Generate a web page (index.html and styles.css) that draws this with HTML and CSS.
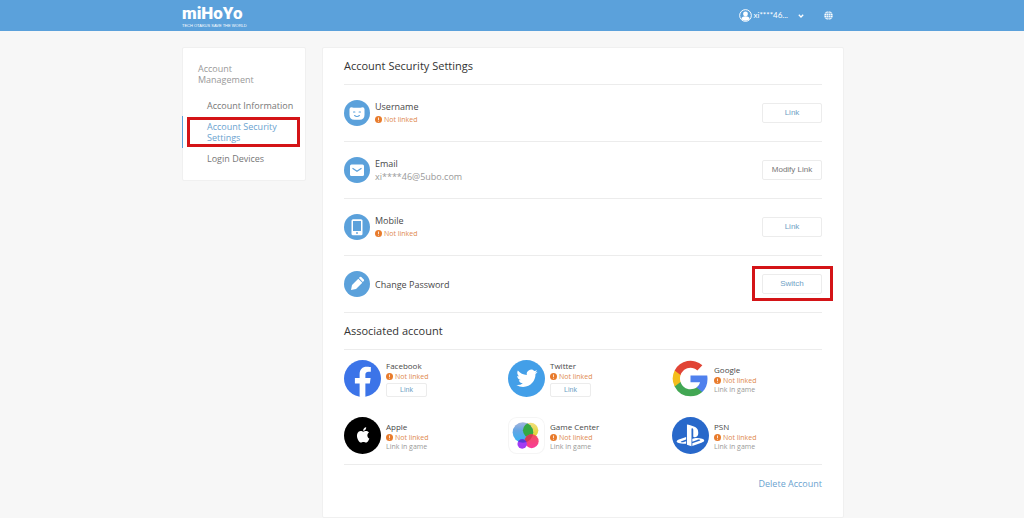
FILE: index.html
```html
<!DOCTYPE html>
<html lang="en">
<head>
<meta charset="utf-8">
<meta name="viewport" content="width=device-width, initial-scale=1">
<title>Account Security Settings</title>
<link rel="stylesheet" href="styles.css">
</head>
<body>
<svg class="defs" aria-hidden="true">
  <symbol id="warn" viewBox="0 0 14 14"><circle cx="7" cy="7" r="7" fill="#e87b2c"/><path d="M7 3v5M7 9.500v1.800" stroke="#fff" stroke-width="1.600"/></symbol>
</svg>
<header class="topbar">
  <div class="container topbar-inner">
    <a class="logo" href="#"><span class="logo-name">miHoYo</span><span class="logo-tag">TECH OTAKUS SAVE THE WORLD</span></a>
    <div class="tools">
      <button class="user" type="button">
        <svg class="avatar" viewBox="0 0 24 24"><circle cx="12" cy="12" r="10.800" fill="none" stroke="#fff" stroke-width="1.800"/><circle cx="12" cy="9" r="4.500" fill="#fff"/><path d="M4.500 19c0-4 3-5.500 7.500-5.500s7.500 1.500 7.500 5.500c-4 3.500-11 3.500-15 0z" fill="#fff"/></svg>
        <span class="user-name">xi****46...</span>
        <svg class="chevron" viewBox="0 0 6 6"><path d="M.8 1.800 3 4l2.200-2.200" fill="none" stroke="#fff" stroke-width="1.300"/></svg>
      </button>
      <button class="language" type="button" aria-label="Language">
        <svg class="globe" viewBox="0 0 18 18"><circle cx="9" cy="9" r="8.500" fill="#fff"/><g fill="none" stroke="#5ba1db" stroke-width="1"><ellipse cx="9" cy="9" rx="4" ry="8.500"/><path d="M9 0v18M0 9h18M1.500 5h15M1.500 13h15"/></g></svg>
      </button>
    </div>
  </div>
</header>
<div class="container layout">
  <nav class="sidebar">
    <h2 class="sidebar-title">Account Management</h2>
    <a class="nav-item" href="#">Account Information</a>
    <a class="nav-item active" href="#" aria-current="page">Account Security Settings<span class="mark mark-nav"></span></a>
    <a class="nav-item" href="#">Login Devices</a>
  </nav>
  <main class="panel">
    <h1 class="heading">Account Security Settings</h1>
    <section class="row">
      <svg class="row-icon" viewBox="0 0 26 26"><circle cx="13" cy="13" r="13" fill="#5ba1db"/><path d="M7.500 7.200q1 0 2 .5h7q1-.5 2-.5 2 0 2 2v5.500q0 5-5 5h-5q-5 0-5-5V9.200q0-2 2-2z" fill="#fff"/><path d="M9.500 12h1.400M15.100 12h1.400M10.600 15.500q2.400 2 4.800 0" fill="none" stroke="#5ba1db" stroke-width="1.100" stroke-linecap="round"/></svg>
      <div class="row-text"><span class="name">Username</span><span class="status"><svg class="warn"><use href="#warn"/></svg>Not linked</span></div>
      <button class="btn" type="button">Link</button>
    </section>
    <section class="row">
      <svg class="row-icon" viewBox="0 0 26 26"><circle cx="13" cy="13" r="13" fill="#5ba1db"/><rect x="6" y="7.500" width="14" height="11.500" rx="1.500" fill="#fff"/><path d="m8.500 11.200 4.500 3 4.500-3" fill="none" stroke="#5ba1db" stroke-width="1.200"/></svg>
      <div class="row-text"><span class="name">Email</span><span class="detail">xi****46@5ubo.com</span></div>
      <button class="btn muted" type="button">Modify Link</button>
    </section>
    <section class="row">
      <svg class="row-icon" viewBox="0 0 26 26"><circle cx="13" cy="13" r="13" fill="#5ba1db"/><rect x="7.500" y="5.200" width="11" height="16" rx="1.500" fill="#fff"/><path d="M9 7h8v10H9z" fill="#5ba1db"/><circle cx="13" cy="19" r=".9" fill="#5ba1db"/></svg>
      <div class="row-text"><span class="name">Mobile</span><span class="status"><svg class="warn"><use href="#warn"/></svg>Not linked</span></div>
      <button class="btn" type="button">Link</button>
    </section>
    <section class="row">
      <svg class="row-icon" viewBox="0 0 26 26"><circle cx="13" cy="13" r="13" fill="#5ba1db"/><path d="m7 19 1-5 6.300-6.300 4 4L12 18zM14.900 7.100l1-1q.7-.6 1.400 0l2.500 2.500q.7.700 0 1.400l-1 1z" fill="#fff"/></svg>
      <div class="row-text"><span class="name">Change Password</span></div>
      <button class="btn" type="button">Switch<span class="mark mark-btn"></span></button>
    </section>
    <h2 class="heading">Associated account</h2>
    <div class="accounts">
      <div class="account">
        <svg class="brand" viewBox="0 0 36 36"><circle cx="18" cy="18" r="18" fill="#3c74e8"/><path d="M15.200 35.800V22.800h-4.600v-5.200h4.600v-3.900c0-4.700 2.700-7.200 6.900-7.200 2 0 4 .4 4 .4v4.500h-2.300c-2.300 0-3 1.400-3 2.900v3.300h5.100l-.8 5.200h-4.300v13a18 18 0 0 1-5.600 0z" fill="#fff"/></svg>
        <div class="account-text"><span class="name">Facebook</span><span class="status"><svg class="warn"><use href="#warn"/></svg>Not linked</span><button class="btn small" type="button">Link</button></div>
      </div>
      <div class="account">
        <svg class="brand" viewBox="0 0 36 36"><circle cx="18" cy="18" r="18" fill="#439fe8"/><path transform="translate(8.200 7.500) scale(.86)" fill="#fff" d="M23.950 4.570a10 10 0 0 1-2.820.77 4.960 4.960 0 0 0 2.160-2.720c-.95.550-2 .95-3.130 1.180a4.920 4.920 0 0 0-8.380 4.480C7.690 8.090 4.070 6.130 1.640 3.160a4.820 4.820 0 0 0-.67 2.480c0 1.710.87 3.210 2.190 4.100a4.900 4.900 0 0 1-2.230-.62v.06a4.920 4.920 0 0 0 3.950 4.830 5 5 0 0 1-2.210.08 4.940 4.940 0 0 0 4.600 3.420A9.870 9.870 0 0 1 0 19.540a14 14 0 0 0 7.550 2.210c9.050 0 14-7.500 14-13.980 0-.21 0-.42-.02-.63a9.940 9.940 0 0 0 2.420-2.570z"/></svg>
        <div class="account-text"><span class="name">Twitter</span><span class="status"><svg class="warn"><use href="#warn"/></svg>Not linked</span><button class="btn small" type="button">Link</button></div>
      </div>
      <div class="account">
        <svg class="brand" viewBox="-.5 -.5 25 25"><path fill="#4f80ed" d="M23.490 12.270c0-.79-.07-1.540-.19-2.270H12v4.510h6.470a5.540 5.540 0 0 1-2.400 3.580v3h3.860c2.260-2.090 3.560-5.170 3.560-8.820z"/><path fill="#42a753" d="M12 24c3.240 0 5.950-1.080 7.930-2.910l-3.860-3c-1.080.72-2.450 1.160-4.070 1.160-3.130 0-5.780-2.110-6.730-4.960H1.290v3.090A12 12 0 0 0 12 24z"/><path fill="#f4bd1c" d="M5.270 14.290a7.140 7.140 0 0 1 0-4.580V6.620H1.290a11.860 11.860 0 0 0 0 10.760z"/><path fill="#e14435" d="M12 4.750c1.770 0 3.350.61 4.600 1.800l3.420-3.420A11.970 11.970 0 0 0 1.290 6.620l3.980 3.090C6.220 6.860 8.870 4.750 12 4.750z"/></svg>
        <div class="account-text"><span class="name">Google</span><span class="status"><svg class="warn"><use href="#warn"/></svg>Not linked</span><span class="note">Link in game</span></div>
      </div>
      <div class="account">
        <svg class="brand" viewBox="0 0 36 36"><circle cx="18" cy="18" r="18" fill="#000"/><path transform="translate(11.200 10) scale(.62)" fill="#fff" d="M12.150 6.900c-.95 0-2.410-1.080-3.960-1.040a5.900 5.900 0 0 0-4.960 3.010c-2.120 3.680-.55 9.100 1.520 12.090 1.010 1.450 2.210 3.090 3.790 3.040 1.520-.07 2.090-.99 3.930-.99 1.830 0 2.350.99 3.960.95 1.640-.03 2.680-1.480 3.680-2.950a13.200 13.200 0 0 0 1.670-3.400c-.04-.01-3.180-1.220-3.220-4.850-.03-3.040 2.480-4.500 2.590-4.560-1.430-2.090-3.620-2.320-4.390-2.380-2-.15-3.670 1.090-4.610 1.090zm3.380-3.070A5.300 5.300 0 0 0 16.780 0a5.400 5.400 0 0 0-3.540 1.810 5.200 5.200 0 0 0-1.300 3.720c1.350.1 2.730-.69 3.590-1.700z"/></svg>
        <div class="account-text"><span class="name">Apple</span><span class="status"><svg class="warn"><use href="#warn"/></svg>Not linked</span><span class="note">Link in game</span></div>
      </div>
      <div class="account">
        <svg class="brand" viewBox="0 0 36 36">
          <defs>
            <linearGradient id="blue" x1="0" y1="0" x2="0" y2="1"><stop offset="0" stop-color="#a5b5db"/><stop offset=".4" stop-color="#65a5e4"/><stop offset="1" stop-color="#31b3f3"/></linearGradient>
            <linearGradient id="pink" x1="0" y1="0" x2="0" y2="1"><stop offset="0" stop-color="#f0505a"/><stop offset="1" stop-color="#fa3b9b"/></linearGradient>
            <linearGradient id="yellow" x1="0" y1="0" x2="0" y2="1"><stop offset="0" stop-color="#f2e07c"/><stop offset="1" stop-color="#dbd026"/></linearGradient>
            <clipPath id="lens"><circle cx="14.500" cy="15" r="10"/></clipPath>
          </defs>
          <rect x=".5" y=".5" width="35" height="35" rx="8" fill="#fff" stroke="#f5f5f5"/>
          <circle cx="22" cy="13" r="7.500" fill="url(#yellow)"/><circle cx="14.500" cy="15" r="10" fill="url(#blue)"/>
          <circle cx="22" cy="13" r="7.500" fill="#35a843" clip-path="url(#lens)"/>
          <circle cx="23" cy="23.500" r="6.800" fill="url(#pink)"/><circle cx="23" cy="23.500" r="6.800" fill="#d43b55" clip-path="url(#lens)"/>
          <circle cx="13.800" cy="26.300" r="4.600" fill="#a33bf4"/><circle cx="13.800" cy="26.300" r="4.600" fill="#553bd5" clip-path="url(#lens)"/>
        </svg>
        <div class="account-text"><span class="name">Game Center</span><span class="status"><svg class="warn"><use href="#warn"/></svg>Not linked</span><span class="note">Link in game</span></div>
      </div>
      <div class="account">
        <svg class="brand" viewBox="0 0 36 36"><circle cx="18" cy="18" r="18" fill="#2868ca"/><path transform="translate(4.500 4.500) scale(1.120)" fill="#fff" d="M8.980 2.600v17.550l3.920 1.260V6.690c0-.69.300-1.150.79-.99.640.180.760.81.760 1.510v5.870c2.440 1.190 4.360 0 4.360-3.140 0-3.230-1.130-4.670-4.440-5.820-1.310-.44-3.730-1.170-5.390-1.520zm4.650 16.240 6.300-2.270c.72-.26.830-.63.250-.82s-1.640-.14-2.360.12l-4.210 1.510v-2.410l.24-.08s1.200-.42 2.900-.63c1.700-.19 3.790.03 5.430.66 1.840.61 2.040 1.470 1.580 2.070s-1.620 1.040-1.620 1.040l-8.510 3.080zM1.810 18.600c-1.900-.54-2.210-1.660-1.350-2.300.8-.6 2.170-1.050 2.170-1.050l5.610-2v2.320l-4.030 1.450c-.71.260-.82.620-.24.810.59.190 1.650.140 2.360-.12l1.930-.71v2.080l-.38.060c-1.940.33-3.990.2-6.070-.54z"/></svg>
        <div class="account-text"><span class="name">PSN</span><span class="status"><svg class="warn"><use href="#warn"/></svg>Not linked</span><span class="note">Link in game</span></div>
      </div>
    </div>
    <a class="delete" href="#">Delete Account</a>
  </main>
</div>
</body>
</html>
```

FILE: styles.css
```css
* { box-sizing: border-box; }
body {
  margin: 0;
  min-height: 100vh;
  display: flex;
  flex-direction: column;
  background: #f7f7f7;
  color: #484848;
  font: 9px/11px "Open Sans", "Noto Sans", sans-serif;
}
button { padding: 0; border: 0; background: none; font: inherit; color: inherit; cursor: pointer; }
a { color: inherit; text-decoration: none; }
h1, h2 { margin: 0; font-weight: 400; }
svg { display: block; flex: none; }
.defs { position: absolute; width: 0; height: 0; }
.container { width: 100%; max-width: 664px; margin: 0 auto; padding-left: 2px; }

.topbar { background: #5ba1db; color: #fff; }
.topbar-inner { display: flex; justify-content: space-between; align-items: center; height: 31px; }
.logo { display: flex; flex-direction: column; }
.logo-name { font: 900 17px/19px Roboto, sans-serif; }
.logo-tag { margin-top: 1px; font: 4px/4px "Liberation Sans", sans-serif; }
.tools { display: flex; align-items: center; gap: 20px; padding-right: 11px; }
.user { display: flex; align-items: center; gap: 2px; font: 8px/11px Lato, "Open Sans", sans-serif; }
.avatar { width: 13px; height: 13px; }
.chevron { width: 6px; height: 6px; margin-left: 8px; }
.globe { width: 9px; height: 9px; }

.layout { flex: 1; display: flex; align-items: flex-start; gap: 16px; padding-top: 16px; }
.sidebar, .panel { background: #fff; border: 1px solid #f0f0f0; border-radius: 2px; }
.sidebar { flex: 0 0 124px; padding: 15px 0 11px; }
.sidebar-title { padding: 0 40px 15px 15px; font-size: 9px; line-height: 11px; color: #999; }
.nav-item { display: block; padding: 0 8px 0 24px; margin-bottom: 5px; color: #777; }
.nav-item.active { position: relative; margin: 0 0 5px -1px; padding: 5px 24px; border-left: 1px solid #5ba1db; color: #6ba3cf; }
.mark { position: absolute; border: 3px solid #d41417; pointer-events: none; }
.mark-nav { inset: 1px 5px 1px 4px; }
.mark-btn { inset: -9px -12px -8px -11px; }

.panel { flex: 1; align-self: stretch; min-width: 0; padding: 0 21px 24px; }
.heading { display: flex; align-items: center; height: 37px; border-bottom: 1px solid #ececec; font-size: 11px; line-height: 16px; color: #333; }
.row { display: flex; align-items: center; gap: 5px; height: 57px; border-bottom: 1px solid #ececec; }
.row-icon { width: 26px; height: 26px; }
.row-text { flex: 1; display: flex; flex-direction: column; gap: 2px; }
.detail { color: #999; }
.status { display: flex; align-items: center; gap: 2px; font-size: 7px; line-height: 11px; color: #e08a50; }
.warn { width: 7px; height: 7px; }
.btn { position: relative; width: 60px; height: 20px; border: 1px solid #ececec; border-radius: 2px; background: #fff; color: #6f9fc5; font: 8px/10px "Liberation Sans", sans-serif; }
.btn.muted { color: #777; }
.btn.small { width: 41px; height: 14px; margin-top: 1px; font-size: 7px; }

.accounts { display: grid; grid-template-columns: repeat(3, 164px); grid-auto-rows: 57px; border-bottom: 1px solid #ececec; }
.account { display: flex; align-items: center; gap: 5px; }
.brand { width: 37px; height: 37px; }
.account-text { font-size: 8px; display: flex; flex-direction: column; align-items: flex-start; }
.note { font-size: 7px; line-height: 8px; color: #999; }
.delete { display: block; width: fit-content; margin: 13px 0 0 auto; color: #6ba3cf; }

@media (max-width: 640px) {
  .layout { flex-direction: column; }
  .sidebar { flex-basis: auto; width: 100%; }
  .accounts { grid-template-columns: 1fr; }
}
```
